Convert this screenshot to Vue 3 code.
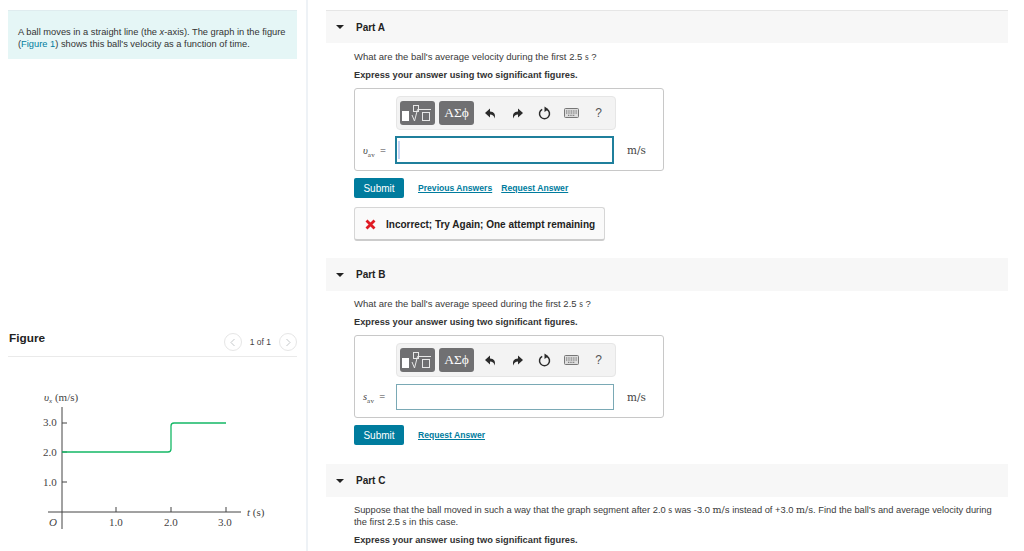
<script setup>
// Static screenshot recreation: all content lives in the template.
</script>

<template>
  <div class="page">
    <aside class="left">
      <div class="intro">
        <p>A ball moves in a straight line (the <i>x</i>-axis). The graph in the figure (<a class="fig-link">Figure 1</a>) shows this ball's velocity as a function of time.</p>
      </div>
      <div class="fig-head">
        <h2>Figure</h2>
        <div class="pager">
          <span class="circ">
            <svg width="7" height="9" viewBox="0 0 7 9"><path d="M5.500 1 2 4.500 5.500 8" fill="none" stroke="#c4c8ca" stroke-width="1"/></svg>
          </span>
          <span class="pg">1 of 1</span>
          <span class="circ">
            <svg width="7" height="9" viewBox="0 0 7 9"><path d="M1.500 1 5 4.500 1.500 8" fill="none" stroke="#c4c8ca" stroke-width="1"/></svg>
          </span>
        </div>
      </div>
      <svg class="graph" width="306" height="160" viewBox="0 391 306 160">
        <g stroke="#444" stroke-width="1" fill="none">
          <path d="M62 407V529M48 512H241"/>
          <path d="M62 423H67M62 452H67M62 482H67M116 507V512M171 507V512M226 507V512"/>
        </g>
        <path d="M62 452H168Q171 452 171 449V426Q171 423 174 423H226" fill="none" stroke="#14b866" stroke-width="1.300"/>
        <g class="st">
          <text x="44" y="401"><tspan font-style="italic">υ</tspan><tspan font-size="7" font-style="italic" dy="2">x</tspan><tspan dy="-2"> (m/s)</tspan></text>
          <text x="43" y="426">3.0</text>
          <text x="43" y="456">2.0</text>
          <text x="43" y="486">1.0</text>
          <text x="49" y="526" font-style="italic">O</text>
          <text x="109" y="526">1.0</text>
          <text x="164" y="526">2.0</text>
          <text x="218" y="526">3.0</text>
          <text x="247" y="516"><tspan font-style="italic">t</tspan> (s)</text>
        </g>
      </svg>
    </aside>

    <main class="right">
      <section class="part first">
        <header class="part-head"><span class="tri"></span><b>Part A</b></header>
        <div class="part-body">
          <p class="q">What are the ball's average velocity during the first 2.5 <span class="unit">s</span> ?</p>
          <p class="ex">Express your answer using two significant figures.</p>
          <div class="answer">
            <div class="toolbar">
              <span class="tbtn tmpl"><i class="blk"></i><svg width="22" height="19" viewBox="0 0 22 19"><g fill="none" stroke="#e8e8e8" stroke-width="1"><rect x="2.500" y="1.500" width="5" height="6"/><rect x="11.500" y="8.500" width="7" height="8"/><path d="M1 11l2.500 6 3-11.500H20"/></g></svg></span>
              <span class="tbtn greek">ΑΣϕ</span>
              <span class="ticons">
                <svg width="13" height="13" viewBox="0 0 13 13"><path d="M6 1.500 1 6l5 4.500V7.500c2.500 0 4 1 4.500 4 1.500-4-.5-7-4.500-7z" fill="#2b2b2b"/></svg>
                <svg width="13" height="13" viewBox="0 0 13 13"><path d="M7 1.500 12 6l-5 4.500V7.500c-2.500 0-4 1-4.500 4-1.500-4 .5-7 4.500-7z" fill="#2b2b2b"/></svg>
                <svg width="13" height="14" viewBox="0 0 13 14"><path d="M4.200 3.300a5 5 0 1 0 4.600 0" fill="none" stroke="#2b2b2b" stroke-width="1.500"/><path d="M6.500 .5v5.500l4-2.700z" fill="#2b2b2b"/></svg>
                <svg width="15" height="10" viewBox="0 0 15 10"><rect x=".5" y=".5" width="14" height="9" rx="1" fill="#ddd" stroke="#777"/><path d="M2 3h11M2 5h11M4 7.300h7" stroke="#666" stroke-dasharray="1 .7"/></svg>
                <span class="help">?</span>
              </span>
            </div>
            <div class="eq">
              <span class="lbl"><i>υ</i><sub>av</sub> =</span>
              <span class="field focus"><i class="caret"></i></span>
              <span class="mu">m/s</span>
            </div>
          </div>
          <div class="actions">
            <button class="submit">Submit</button>
            <a class="lnk prev">Previous Answers</a>
            <a class="lnk">Request Answer</a>
          </div>
          <div class="feedback">
            <svg width="11" height="11" viewBox="0 0 11 11"><path d="M1.500 1.500l8 8M9.500 1.500l-8 8" stroke="#e01b24" stroke-width="2.800"/></svg>
            <b>Incorrect; Try Again; One attempt remaining</b>
          </div>
        </div>
      </section>

      <section class="part b">
        <header class="part-head"><span class="tri"></span><b>Part B</b></header>
        <div class="part-body">
          <p class="q">What are the ball's average speed during the first 2.5 <span class="unit">s</span> ?</p>
          <p class="ex">Express your answer using two significant figures.</p>
          <div class="answer">
            <div class="toolbar">
              <span class="tbtn tmpl"><i class="blk"></i><svg width="22" height="19" viewBox="0 0 22 19"><g fill="none" stroke="#e8e8e8" stroke-width="1"><rect x="2.500" y="1.500" width="5" height="6"/><rect x="11.500" y="8.500" width="7" height="8"/><path d="M1 11l2.500 6 3-11.500H20"/></g></svg></span>
              <span class="tbtn greek">ΑΣϕ</span>
              <span class="ticons">
                <svg width="13" height="13" viewBox="0 0 13 13"><path d="M6 1.500 1 6l5 4.500V7.500c2.500 0 4 1 4.500 4 1.500-4-.5-7-4.500-7z" fill="#2b2b2b"/></svg>
                <svg width="13" height="13" viewBox="0 0 13 13"><path d="M7 1.500 12 6l-5 4.500V7.500c-2.500 0-4 1-4.500 4-1.500-4 .5-7 4.500-7z" fill="#2b2b2b"/></svg>
                <svg width="13" height="14" viewBox="0 0 13 14"><path d="M4.200 3.300a5 5 0 1 0 4.600 0" fill="none" stroke="#2b2b2b" stroke-width="1.500"/><path d="M6.500 .5v5.500l4-2.700z" fill="#2b2b2b"/></svg>
                <svg width="15" height="10" viewBox="0 0 15 10"><rect x=".5" y=".5" width="14" height="9" rx="1" fill="#ddd" stroke="#777"/><path d="M2 3h11M2 5h11M4 7.300h7" stroke="#666" stroke-dasharray="1 .7"/></svg>
                <span class="help">?</span>
              </span>
            </div>
            <div class="eq">
              <span class="lbl"><i>s</i><sub>av</sub> =</span>
              <span class="field"></span>
              <span class="mu">m/s</span>
            </div>
          </div>
          <div class="actions">
            <button class="submit">Submit</button>
            <a class="lnk prev">Request Answer</a>
          </div>
        </div>
      </section>

      <section class="part c">
        <header class="part-head"><span class="tri"></span><b>Part C</b></header>
        <div class="part-body">
          <p class="q long">Suppose that the ball moved in such a way that the graph segment after 2.0 <span class="unit">s</span> was -3.0 <span class="unit wide">m/s</span> instead of +3.0 <span class="unit wide">m/s</span>. Find the ball's and average velocity during<br>the first 2.5 <span class="unit">s</span> in this case.</p>
          <p class="ex">Express your answer using two significant figures.</p>
        </div>
      </section>
    </main>
  </div>
</template>

<style>
html, body { margin: 0; background: #fff; overflow: hidden; }
</style>

<style scoped>
.page { display: flex; width: 1024px; height: 551px; overflow: hidden; font-family: "Liberation Sans", Arial, sans-serif; color: #333; font-size: 9px; }
p { margin: 0; }
.left { width: 308px; flex: none; box-sizing: border-box; padding: 10px 9px 0 8px; border-right: 2px solid #eef2f6; }
.intro { background: #e5f6f6; border-top: 1px solid #dfecef; height: 49px; box-sizing: border-box; padding: 15px 10px 0 10px; line-height: 12px; font-size: 9.300px; width: 289px; }
.fig-link { color: #007c9e; }
.fig-head { display: flex; justify-content: space-between; align-items: center; width: 289px; height: 34px; margin-top: 263px; border-bottom: 1px solid #eaeaea; }
.fig-head h2 { margin: 0 0 3px 1px; font-size: 11.800px; color: #222; }
.pager { display: flex; align-items: center; gap: 8px; margin-top: 6px; }
.circ { width: 18px; height: 18px; border: 1px solid #e6e6e6; border-radius: 50%; box-sizing: border-box; display: flex; align-items: center; justify-content: center; }
.pg { font-size: 8.500px; color: #444; }
.graph { display: block; margin-left: -8px; margin-top: 34px; }
.st text { font-family: "Liberation Serif", serif; font-size: 11px; fill: #444; }
.right { flex: 1; padding: 10px 16px 0 18px; min-width: 0; }
.part-head { display: flex; align-items: center; height: 33px; background: #f7f7f7; border-top: 1px solid #e6e6e6; box-sizing: border-box; font-size: 10px; color: #222; }
.b .part-head, .c .part-head { border-top: 0; }
.tri { width: 0; height: 0; border: 4px solid transparent; border-top: 4px solid #222; border-bottom: 0; margin: 0 12px 0 10px; }
.part-body { padding-left: 28px; }
.q { font-size: 9.500px; margin-top: 8px; line-height: 12px; color: #3a3a3a; }
.b .q { margin-top: 7px; }
.q.long { font-size: 9.300px; line-height: 11px; margin-top: 7px; white-space: nowrap; }
.long .unit { font-size: 10px; }
.long .unit.wide { font-family: "DejaVu Serif", serif; font-size: 9.500px; }
.ex { font-size: 9.250px; font-weight: 700; margin-top: 6px; line-height: 13px; color: #333; }
.unit { font-family: "Liberation Serif", serif; }
.answer { width: 310px; height: 83px; margin-top: 6px; border: 1px solid #c8c8c8; border-radius: 3px; box-sizing: border-box; padding: 7px 0 0 41px; }
.toolbar { display: flex; align-items: center; width: 220px; height: 34px; box-sizing: border-box; padding: 0 3px; gap: 4px; background: #f3f3f3; border: 1px solid #e6e6e6; border-radius: 4px; }
.tbtn { display: flex; align-items: center; justify-content: center; height: 24px; background: #707072; border-radius: 3px; color: #fff; box-sizing: border-box; }
.tmpl { width: 35px; gap: 2px; }
.blk { display: block; width: 7px; height: 10px; background: #fff; margin-top: 6px; }
.greek { width: 35px; font-family: "Liberation Serif", serif; font-size: 13.500px; }
.ticons { display: grid; grid-template-columns: repeat(5, 27px); justify-items: center; align-items: center; margin-left: -1px; }
.help { font-size: 12px; color: #555; }
.eq { display: flex; align-items: center; margin-top: 6px; margin-left: -41px; }
.lbl { width: 41px; box-sizing: border-box; padding-left: 8px; font-family: "Liberation Serif", serif; font-size: 10.500px; color: #444; white-space: nowrap; }
.lbl sub { font-size: 7px; line-height: 0; margin-right: 2px; letter-spacing: .4px; }
.field { display: block; width: 218px; height: 26px; margin-top: 1px; box-sizing: border-box; border: 1px solid #7aa9b5; background: #fff; padding: 3px 2px; }
.field.focus { border: 2px solid #1f7f9c; width: 219px; height: 28px; margin: 0 0 0 -1px; padding: 3px 1px; }
.caret { display: block; width: 2px; height: 100%; background: #c6d4f5; }
.mu { margin-left: 13px; font-family: "DejaVu Serif", serif; font-size: 10.500px; color: #444; }
.actions { display: flex; align-items: center; margin-top: 7px; }
.submit { width: 50px; height: 20px; padding: 0; border: 0; border-radius: 2px; background: #007c9e; color: #fff; font: 10px "Liberation Sans", Arial, sans-serif; }
.lnk { font-size: 8.600px; font-weight: 700; color: #007c9e; text-decoration: underline; margin-left: 9px; }
.lnk.prev { margin-left: 14px; }
.feedback { display: flex; align-items: center; gap: 10px; width: 251px; height: 34px; box-sizing: border-box; margin-top: 9px; padding: 2px 0 0 10px; background: #fafafa; border: 1px solid #d6d6d6; border-bottom: 2px solid #ccc; border-radius: 3px; font-size: 10px; color: #222; }
.part.b { margin-top: 17px; }
.part.c { margin-top: 19px; }
</style>
